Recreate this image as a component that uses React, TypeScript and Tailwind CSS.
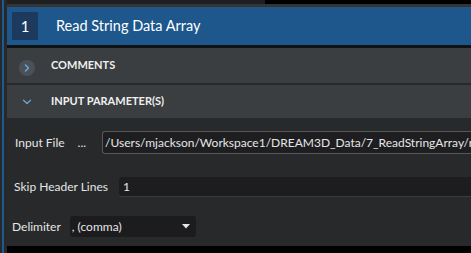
import React from 'react';

function ChevronRight() {
  return (
    <svg width="8" height="10" viewBox="0 0 8 10" fill="none">
      <path d="M2.5 2 L5.5 5 L2.5 8" stroke="#6fa3d6" strokeWidth="1.5" strokeLinecap="round" strokeLinejoin="round" />
    </svg>
  );
}

function ChevronDown() {
  return (
    <svg width="10" height="6" viewBox="0 0 10 6" fill="none">
      <path d="M1.5 1.2 L5 4.5 L8.5 1.2" stroke="#6fa3d6" strokeWidth="1.3" strokeLinecap="round" strokeLinejoin="round" />
    </svg>
  );
}

export default function App() {
  return (
    <div className="flex w-[471px] h-[253px] overflow-hidden bg-[#28292b] font-['Lato','Noto_Sans',sans-serif] text-[#e6e6e6]">
      {/* left gutter */}
      <div className="w-[7px] h-full bg-[#27282a] flex">
        <div className="ml-[2px] w-[2px] h-full bg-[#1d5a8f]" />
      </div>

      <div className="flex-1 flex flex-col min-w-0">
        <div className="h-[4px] flex">
          <div className="w-[258px] bg-[#1f1f21]" />
          <div className="flex-1 bg-black" />
        </div>
        <div className="h-[3px] bg-[#333436]" />

        {/* filter title */}
        <div className="h-[38px] bg-[#1d578c] flex items-center">
          <div className="ml-[5px] w-[26px] h-[28px] bg-[#1b3a5e] flex items-center justify-center text-[15px] text-white">
            1
          </div>
          <span className="ml-[18px] text-[14.5px] text-white">Read String Data Array</span>
        </div>
        <div className="h-[3px] bg-[#111213]" />

        {/* comments */}
        <div className="h-[35px] bg-[#3b3e40] flex items-center">
          <div className="ml-[12px] mt-[4px] w-[16px] h-[16px] rounded-full bg-[#4a5159] flex items-center justify-center">
            <ChevronRight />
          </div>
          <span className="ml-[16px] text-[11px] font-bold text-[#f0f0f0]">COMMENTS</span>
        </div>
        <div className="h-[2px] bg-[#29292b]" />

        {/* input params */}
        <div className="h-[33px] bg-[#3b3e40] flex items-center">
          <div className="ml-[15px] w-[10px] flex justify-center mt-[1px]">
            <ChevronDown />
          </div>
          <span className="ml-[19px] text-[11px] font-bold text-[#f0f0f0]">INPUT PARAMETER(S)</span>
        </div>

        <div className="flex-1 bg-[#28292b] flex flex-col pt-[13px] text-[12px]">
          <div className="flex items-center h-[23px]">
            <span className="ml-[8px]">Input File</span>
            <span className="ml-[13px]">...</span>
            <div className="ml-[16px] flex-1 min-w-0 h-full rounded-l-[3px] border border-r-0 border-[#555759] bg-[#1e1e20] flex items-center pl-[2px] whitespace-nowrap overflow-hidden">
              /Users/mjackson/Workspace1/DREAM3D_Data/7_ReadStringArray/ra
            </div>
          </div>

          <div className="flex items-center h-[20px] mt-[23px]">
            <span className="ml-[7px]">Skip Header Lines</span>
            <div className="ml-[11px] flex-1 h-full rounded-l-[3px] bg-[#1d1d1f] border-b border-[#3c3c3e] flex items-center pl-[4px]">
              1
            </div>
          </div>

          <div className="flex items-center h-[21px] mt-[19px]">
            <span className="ml-[5px]">Delimiter</span>
            <div className="ml-[9px] w-[126px] h-full rounded-[3px] bg-[#1c1c1e] flex items-center justify-between pl-[2px] pr-[6px]">
              <span>, (comma)</span>
              <svg width="8" height="5" viewBox="0 0 8 5">
                <path d="M0 0 H8 L4 4.5 Z" fill="#e6e6e6" />
              </svg>
            </div>
          </div>
        </div>
        <div className="h-[7px] bg-black" />
      </div>
    </div>
  );
}
